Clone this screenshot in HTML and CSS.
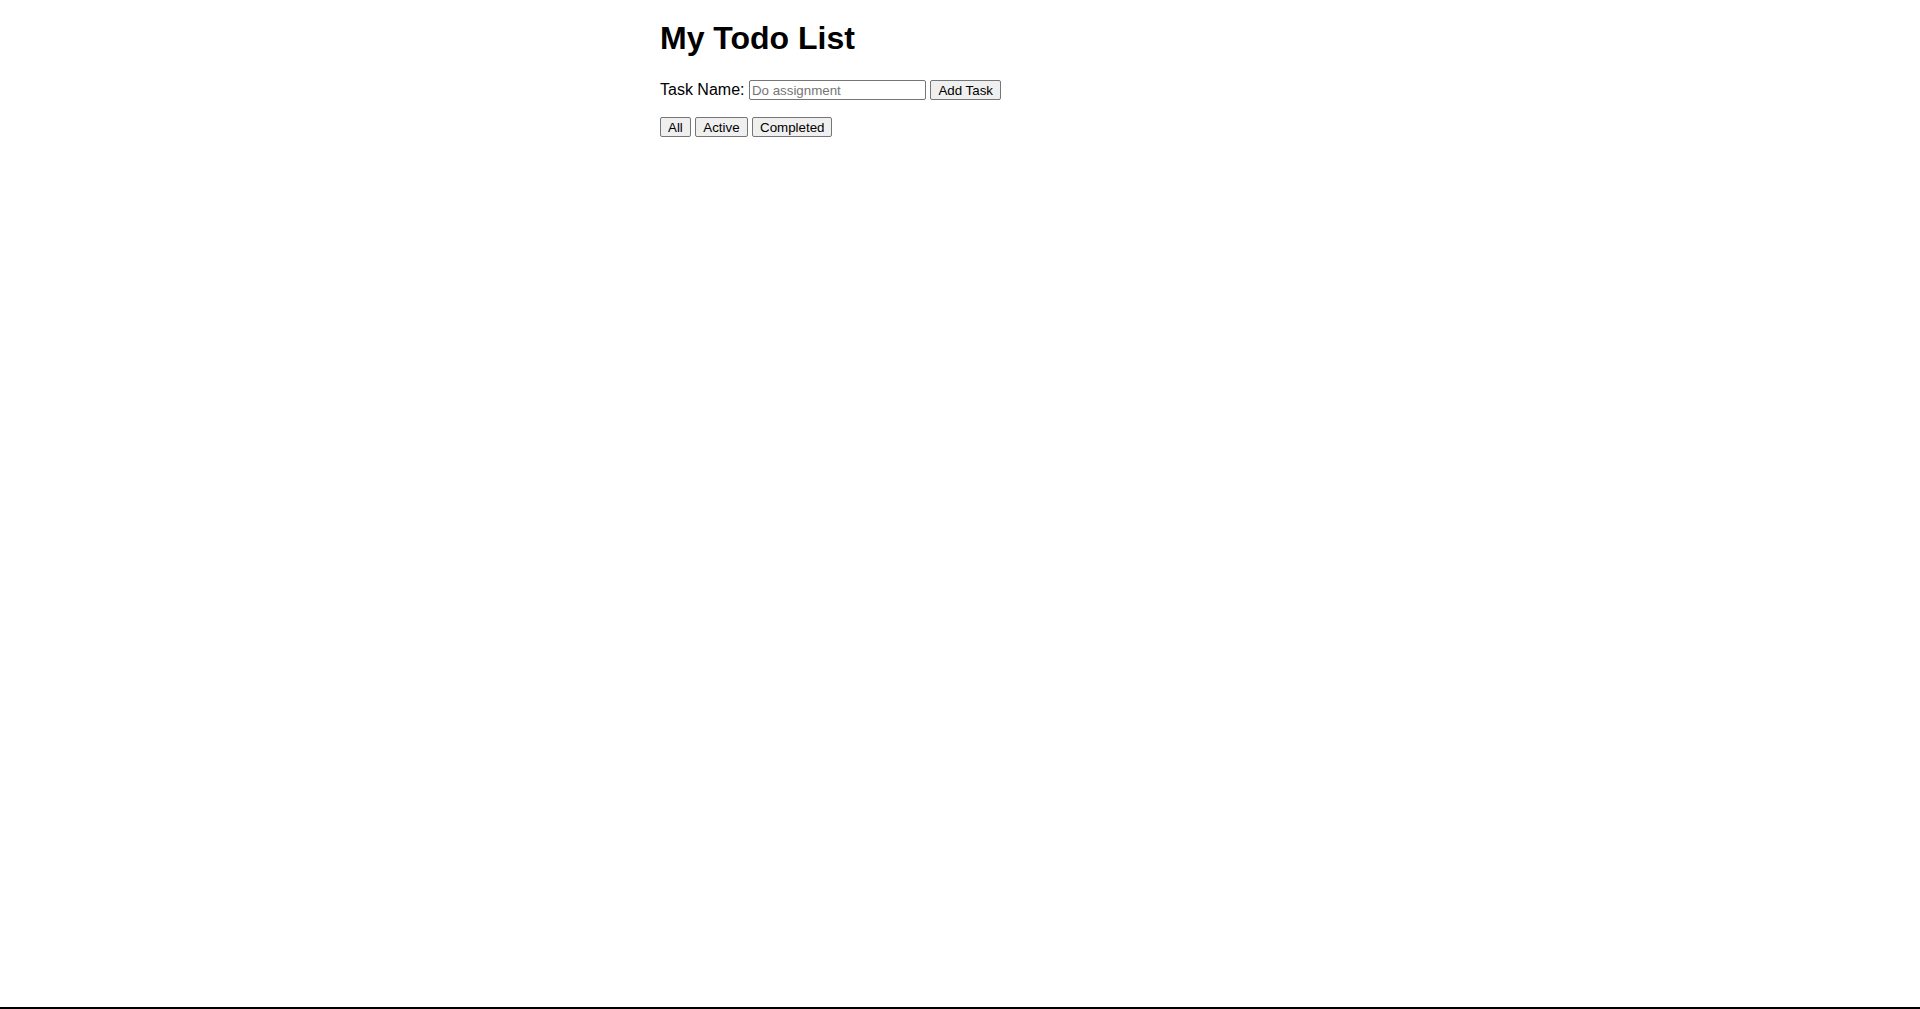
FILE: index.html
```html
<!DOCTYPE html>
<html lang="en">
<head>
<meta charset="utf-8">
<title>My Todo List</title>
<link rel="stylesheet" href="styles.css">
</head>
<body>
<div class="app">
  <h1 class="title">My Todo List</h1>
  <form class="add-form">
    <label class="label" for="task">Task Name:</label>
    <input class="task-input" id="task" type="text" placeholder="Do assignment">
    <button class="btn" type="button">Add Task</button>
  </form>
  <div class="filters">
    <button class="btn" type="button">All</button>
    <button class="btn" type="button">Active</button>
    <button class="btn" type="button">Completed</button>
  </div>
</div>
</body>
</html>
```
FILE: styles.css
```css
html {
  min-height: 100vh;
  box-sizing: border-box;
  border-bottom: 2px solid #000;
}
body {
  margin: 0 8px;
  padding: 0;
  font-family: "Liberation Sans", Arial, sans-serif;
  color: #000;
  background: #fff;
}
.app {
  max-width: 600px;
  margin: 0 auto;
  padding-top: 1px;
}
.title {
  font-size: 32px;
  font-weight: bold;
  line-height: 37px;
  margin: 19px 0 23px;
}
.add-form {
  margin: 0 0 17px;
}
.label {
  font-size: 16px;
  vertical-align: middle;
}
.task-input {
  box-sizing: border-box;
  width: 177px;
  height: 20px;
  padding: 1px 2px;
  border: 1px solid #767676;
  border-radius: 2px;
  font-family: "Liberation Sans", Arial, sans-serif;
  font-size: 13.33px;
  vertical-align: middle;
}
.btn {
  box-sizing: border-box;
  height: 20px;
  padding: 1px 7px;
  border: 1px solid #767676;
  border-radius: 2px;
  background: #efefef;
  color: #000;
  font-family: "Liberation Sans", Arial, sans-serif;
  font-size: 13.33px;
  vertical-align: middle;
}
.filters {
  margin: 0;
}
```
